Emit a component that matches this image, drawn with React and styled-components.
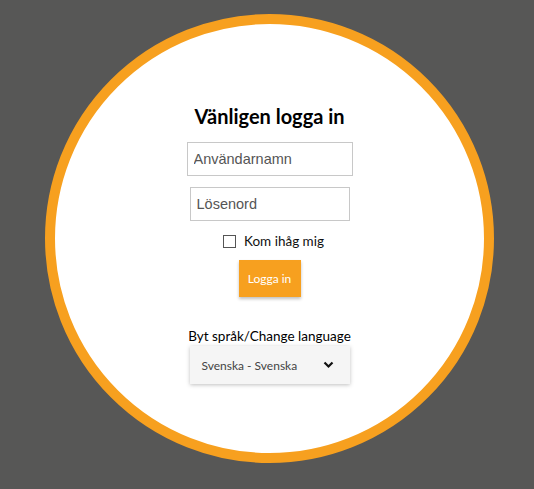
import React from "react";
import styled, { createGlobalStyle } from "styled-components";

const GlobalStyle = createGlobalStyle`
  html, body {
    margin: 0;
    padding: 0;
    background: #575756;
  }
`;

export default function App() {
  return (
    <Page>
      <GlobalStyle />
      <Circle>
        <Title>Vänligen logga in</Title>
        <Input type="text" placeholder="Användarnamn" $width={166} />
        <Input type="password" placeholder="Lösenord" $width={160} $top={11} />
        <Remember>
          <Checkbox type="checkbox" />
          <span>Kom ihåg mig</span>
        </Remember>
        <LoginButton type="button">Logga in</LoginButton>
        <LangLabel>Byt språk/Change language</LangLabel>
        <LangSelect>
          <span>Svenska - Svenska</span>
          <svg width="11" height="8" viewBox="0 0 11 8">
            <polyline
              points="1.5,1.5 5.5,5.5 9.5,1.5"
              fill="none"
              stroke="#111"
              strokeWidth="2.2"
            />
          </svg>
        </LangSelect>
      </Circle>
    </Page>
  );
}

const Page = styled.div`
  min-height: 489px;
  padding: 14px 0 0 45px;
  box-sizing: border-box;
`;

const Circle = styled.div`
  width: 449px;
  height: 449px;
  box-sizing: border-box;
  border: 10px solid #f7a01f;
  border-radius: 50%;
  background: #fff;
  display: flex;
  flex-direction: column;
  align-items: center;
  padding-top: 80px;
  font-family: Lato, "Liberation Sans", sans-serif;
`;

const Title = styled.h1`
  margin: 0 0 14px;
  font-size: 20px;
  line-height: 24px;
  font-weight: 700;
  color: #000;
`;

const Input = styled.input`
  width: ${(p) => p.$width}px;
  height: 34px;
  margin-top: ${(p) => p.$top || 0}px;
  box-sizing: border-box;
  border: 1px solid #c8c8c8;
  padding: 0 6px;
  font-family: "Liberation Sans", Arial, sans-serif;
  font-size: 14.5px;
  color: #333;
  outline: none;

  &::placeholder {
    color: #555;
  }
`;

const Remember = styled.label`
  display: flex;
  align-items: center;
  gap: 8px;
  height: 20px;
  margin-top: 10px;
  margin-left: 8px;
  font-size: 13.5px;
  color: #111;
`;

const Checkbox = styled.input`
  appearance: none;
  width: 13px;
  height: 13px;
  margin: 0;
  border: 1px solid #555;
  background: #fff;
  box-sizing: border-box;
`;

const LoginButton = styled.button`
  width: 62px;
  height: 37px;
  margin-top: 9px;
  border: none;
  background: #f7a01f;
  color: #fff;
  font-family: inherit;
  font-size: 12px;
  box-shadow: 0 2px 3px rgba(0, 0, 0, 0.25);
  padding: 0;
`;

const LangLabel = styled.div`
  margin-top: 30px;
  font-size: 13.5px;
  line-height: 18px;
  color: #000;
`;

const LangSelect = styled.div`
  width: 160px;
  height: 38px;
  margin-top: 1px;
  box-sizing: border-box;
  display: flex;
  align-items: center;
  justify-content: space-between;
  padding: 0 16px 0 12px;
  background: #f5f5f5;
  box-shadow: 0 1px 4px rgba(0, 0, 0, 0.25);
  font-size: 12px;
  color: #444;
`;
